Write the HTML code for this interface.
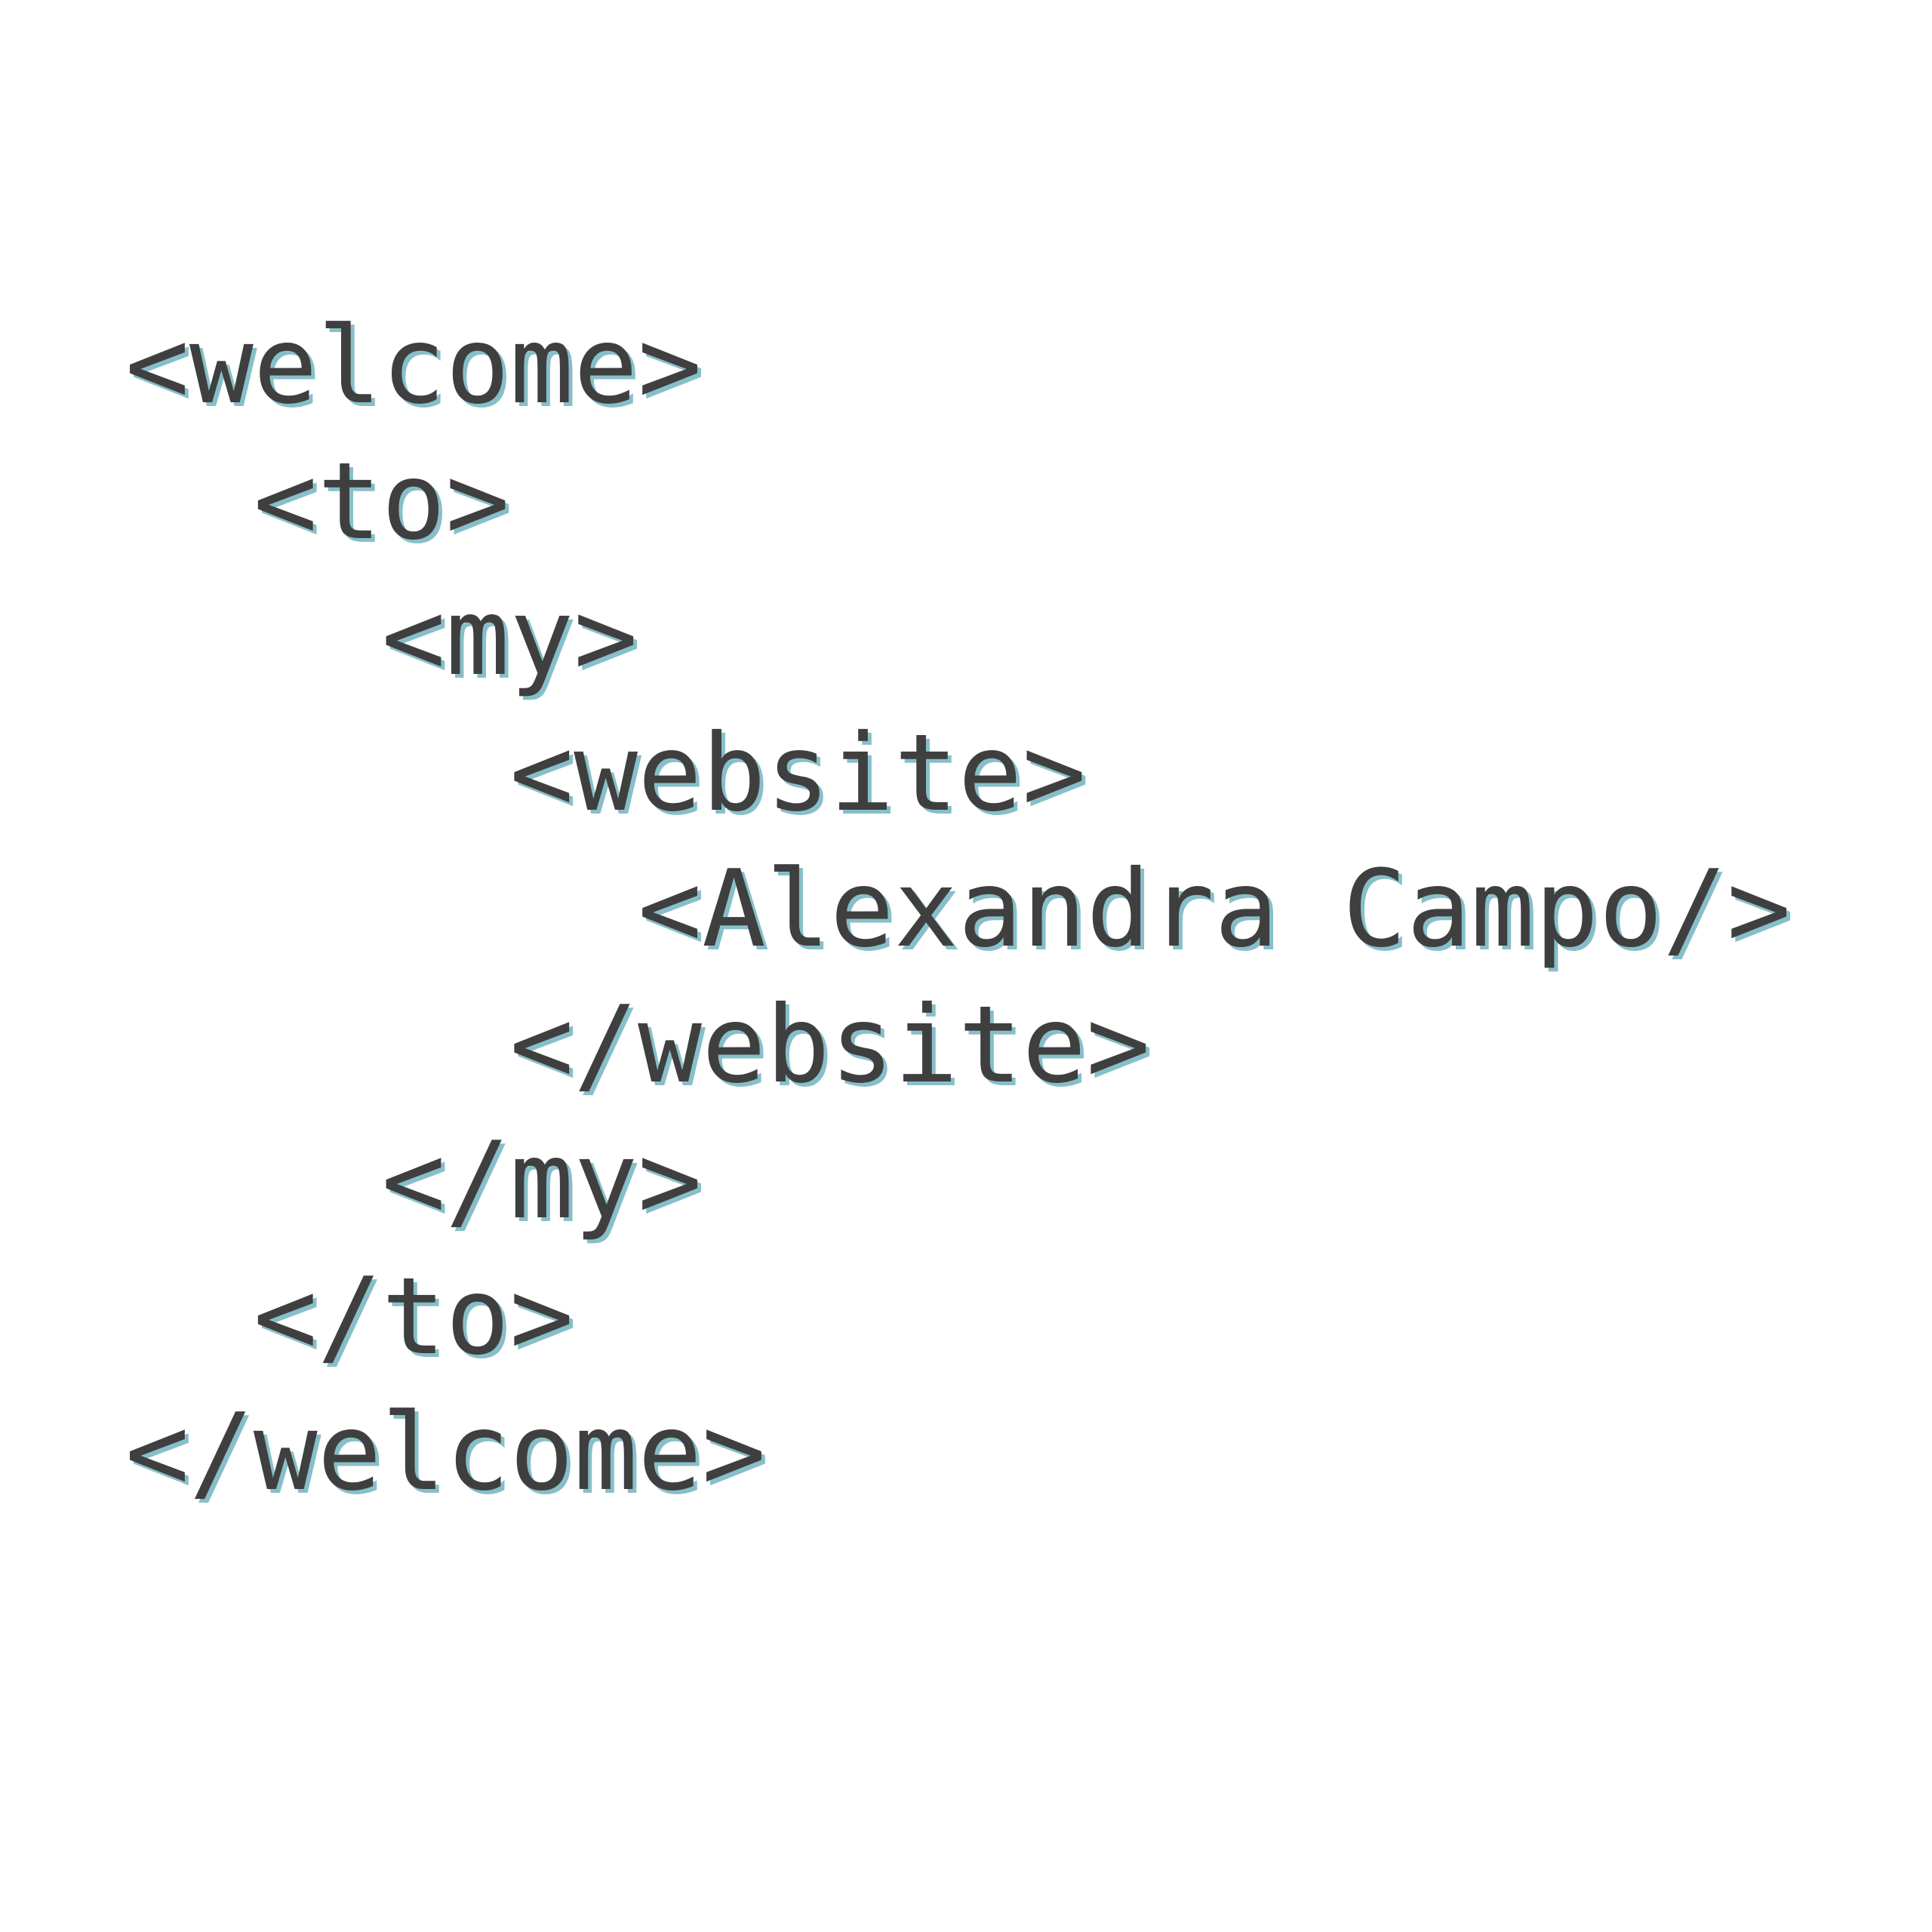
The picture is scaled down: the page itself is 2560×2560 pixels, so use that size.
<!DOCTYPE html>
<html><head><meta charset="utf-8"><style>
html,body{margin:0;padding:0;background:#fff;width:2560px;height:2560px;overflow:hidden}
pre{position:absolute;left:166px;top:395px;margin:0;font-family:"DejaVu Sans Mono","Liberation Mono",monospace;font-size:141px;line-height:180px;color:#3f3f3f;text-shadow:5px 5px 0 #86bfca;white-space:pre}
</style></head><body>
<pre>&lt;welcome&gt;
  &lt;to&gt;
    &lt;my&gt;
      &lt;website&gt;
        &lt;Alexandra Campo/&gt;
      &lt;/website&gt;
    &lt;/my&gt;
  &lt;/to&gt;
&lt;/welcome&gt;</pre>
</body></html>
